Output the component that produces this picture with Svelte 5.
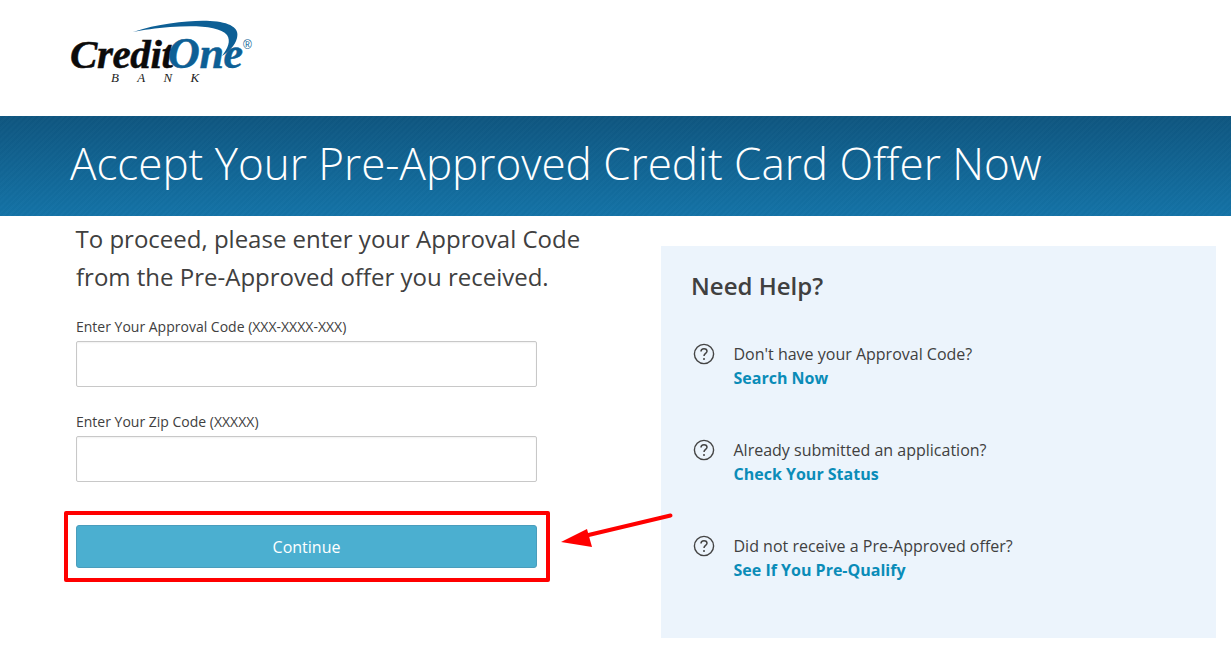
<script lang="ts">
  const helpItems = [
    { question: "Don't have your Approval Code?", link: 'Search Now' },
    { question: 'Already submitted an application?', link: 'Check Your Status' },
    { question: 'Did not receive a Pre-Approved offer?', link: 'See If You Pre-Qualify' }
  ];
</script>

<div class="page">
  <header class="top">
    <svg class="logo" viewBox="0 0 190 70" width="190" height="70" aria-label="Credit One Bank">
      <path d="M63 12 C90 3 122 0 140 1 C160 2 170 8 167 18 C165 26 158 32 152 36 C158 28 161 21 157 15 C150 6 125 5 100 7 C86 8 73 10 63 12 Z" fill="#0d5f95" />
      <text x="0" y="48" class="credit">Credit</text>
      <text x="98" y="48" class="one">One</text>
      <text x="173" y="29" class="reg">®</text>
      <text x="41" y="62" class="bank">BANK</text>
    </svg>
  </header>

  <section class="banner">
    <h1>Accept Your Pre-Approved Credit Card Offer Now</h1>
  </section>

  <main class="content">
    <form class="form" on:submit|preventDefault>
      <p class="intro">To proceed, please enter your Approval Code from the Pre-Approved offer you received.</p>

      <label class="field">
        <span>Enter Your Approval Code (XXX-XXXX-XXX)</span>
        <input type="text" />
      </label>

      <label class="field">
        <span>Enter Your Zip Code (XXXXX)</span>
        <input type="text" />
      </label>

      <div class="button-wrap">
        <button type="submit">Continue</button>
        <div class="highlight"></div>
      </div>
    </form>

    <aside class="help">
      <h2>Need Help?</h2>
      <ul>
        {#each helpItems as item}
          <li>
            <svg class="q-icon" viewBox="0 0 22 22" width="22" height="22">
              <circle cx="11" cy="11" r="9.6" fill="none" stroke="#444" stroke-width="1.4" />
              <path d="M8 8.6 C8 6.7 9.4 5.7 11 5.7 C12.7 5.7 14 6.8 14 8.3 C14 10.4 11 10.5 11 13" fill="none" stroke="#444" stroke-width="1.5" />
              <circle cx="11" cy="15.9" r="1" fill="#444" />
            </svg>
            <div>
              <div class="question">{item.question}</div>
              <a href="#top" class="link">{item.link}</a>
            </div>
          </li>
        {/each}
      </ul>
    </aside>

    <svg class="arrow" viewBox="0 0 114 36" width="114" height="36">
      <path d="M110.5 3.5 L18 25.5" stroke="#f00" stroke-width="4" stroke-linecap="round" />
      <path d="M1 30 L27 17 L32 35 Z" fill="#f00" />
    </svg>
  </main>
</div>

<style>
  :global(body) {
    margin: 0;
    background: #fff;
    font-family: "Open Sans", sans-serif;
    color: #404040;
  }

  .page {
    width: 1231px;
    height: 655px;
    overflow: hidden;
  }

  .top {
    height: 116px;
    padding: 20px 0 0 70px;
    box-sizing: border-box;
  }

  .logo {
    display: block;
  }

  .credit,
  .one {
    font-family: "Liberation Serif", serif;
    font-style: italic;
    font-weight: 700;
    letter-spacing: -0.4px;
    stroke-width: 0.5px;
  }

  .credit {
    font-size: 41px;
    fill: #0b0b0b;
    stroke: #0b0b0b;
  }

  .one {
    font-size: 44px;
    fill: #0d5f95;
    stroke: #0d5f95;
  }

  .reg {
    font-family: "Liberation Sans", sans-serif;
    font-size: 12px;
    fill: #0d5f95;
  }

  .bank {
    font-family: "Liberation Serif", serif;
    font-style: italic;
    font-size: 13px;
    letter-spacing: 18.3px;
    fill: #222;
  }

  .banner {
    height: 100px;
    padding: 0 0 7px 70px;
    box-sizing: border-box;
    display: flex;
    align-items: center;
    background:
      repeating-linear-gradient(135deg, rgba(255, 255, 255, 0.012) 0 2px, rgba(0, 0, 0, 0.012) 2px 4px),
      linear-gradient(#0f5680, #1473a7);
  }

  h1 {
    margin: 0;
    font-size: 44px;
    font-weight: 300;
    line-height: 1;
    color: #fff;
    white-space: nowrap;
  }

  .content {
    position: relative;
    display: flex;
    align-items: flex-start;
  }

  .form {
    width: 461px;
    margin: 4px 124px 0 76px;
  }

  .intro {
    margin: 0 0 21px;
    font-size: 24px;
    line-height: 38px;
    width: 520px;
    color: #404040;
    text-indent: -0.5px;
  }

  .field {
    display: block;
    margin-bottom: 25px;
  }

  .field span {
    display: block;
    font-size: 14px;
    line-height: 20px;
    margin-bottom: 4px;
  }

  input {
    display: block;
    width: 100%;
    height: 46px;
    box-sizing: border-box;
    border: 1px solid #c8c8c8;
    border-radius: 2px;
    background: #fff;
    box-shadow: inset 0 1px 2px rgba(0, 0, 0, 0.06);
  }

  .button-wrap {
    position: relative;
    margin-top: 43px;
  }

  button {
    display: block;
    width: 100%;
    height: 43px;
    border: 1px solid #4a9dbc;
    border-radius: 3px;
    background: #4bafd0;
    color: #fff;
    font-family: inherit;
    font-size: 16px;
  }

  .highlight {
    position: absolute;
    inset: -14px -13px -14px -12px;
    border: 4px solid #f00;
    border-radius: 2px;
  }

  .help {
    width: 555px;
    height: 392px;
    box-sizing: border-box;
    margin-top: 30px;
    padding: 24px 31px 24px 30px;
    background: #ecf4fc;
  }

  h2 {
    margin: 0 0 40px;
    font-size: 24px;
    font-weight: 600;
    line-height: 32px;
    color: #404040;
  }

  ul {
    margin: 0;
    padding: 0;
    list-style: none;
    display: flex;
    flex-direction: column;
    gap: 48px;
  }

  li {
    display: flex;
    gap: 18.5px;
    align-items: flex-start;
  }

  .q-icon {
    flex: none;
    margin: 1px 0 0 2px;
  }

  .question {
    font-size: 16px;
    line-height: 24px;
  }

  .link {
    display: block;
    font-size: 16px;
    font-weight: 700;
    line-height: 24px;
    color: #0a8cb8;
    text-decoration: none;
  }

  .arrow {
    position: absolute;
    left: 560px;
    top: 296px;
  }
</style>
